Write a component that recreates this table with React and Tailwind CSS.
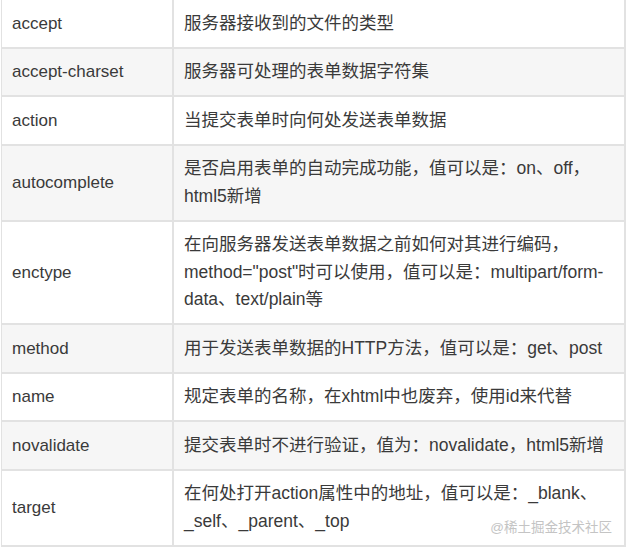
const rows = [
  { name: "accept", desc: ["服务器接收到的文件的类型"] },
  { name: "accept-charset", desc: ["服务器可处理的表单数据字符集"] },
  { name: "action", desc: ["当提交表单时向何处发送表单数据"] },
  { name: "autocomplete", desc: ["是否启用表单的自动完成功能，值可以是：on、off，", "html5新增"] },
  {
    name: "enctype",
    desc: [
      "在向服务器发送表单数据之前如何对其进行编码，",
      'method="post"时可以使用，值可以是：multipart/form-',
      "data、text/plain等",
    ],
  },
  { name: "method", desc: ["用于发送表单数据的HTTP方法，值可以是：get、post"] },
  { name: "name", desc: ["规定表单的名称，在xhtml中也废弃，使用id来代替"] },
  { name: "novalidate", desc: ["提交表单时不进行验证，值为：novalidate，html5新增"] },
  { name: "target", desc: ["在何处打开action属性中的地址，值可以是：_blank、", "_self、_parent、_top"] },
];

export default function App() {
  return (
    <div
      className="relative w-[627px] h-[550px] overflow-hidden bg-white"
      style={{ fontFamily: '"Liberation Sans", "Noto Sans CJK SC", sans-serif' }}
    >
      <div className="ml-px mr-px -mt-[2px] w-[625px] border-l border-r-2 border-b-2 border-[#e2e2e2]">
        {rows.map((r, i) => (
          <div
            key={r.name}
            className={`flex border-t-2 border-[#e2e2e2] ${i % 2 === 1 ? "bg-[#f6f6f6]" : "bg-white"}`}
          >
            <div className="w-[172px] shrink-0 flex items-center pl-[10px] py-[9.5px] text-[17px] leading-[27.5px] text-[#3a3a3a] border-r-2 border-[#e2e2e2]">
              {r.name}
            </div>
            <div className="flex-1 pl-[10px] py-[9.5px] text-[17.5px] leading-[27.5px] text-[#3a3a3a] whitespace-nowrap">
              {r.desc.map((line, j) => (
                <div key={j}>{line}</div>
              ))}
            </div>
          </div>
        ))}
      </div>
      <div className="absolute right-[15px] bottom-[16px] text-[13.5px] leading-none text-[#c4c4c4]">
        @稀土掘金技术社区
      </div>
    </div>
  );
}
